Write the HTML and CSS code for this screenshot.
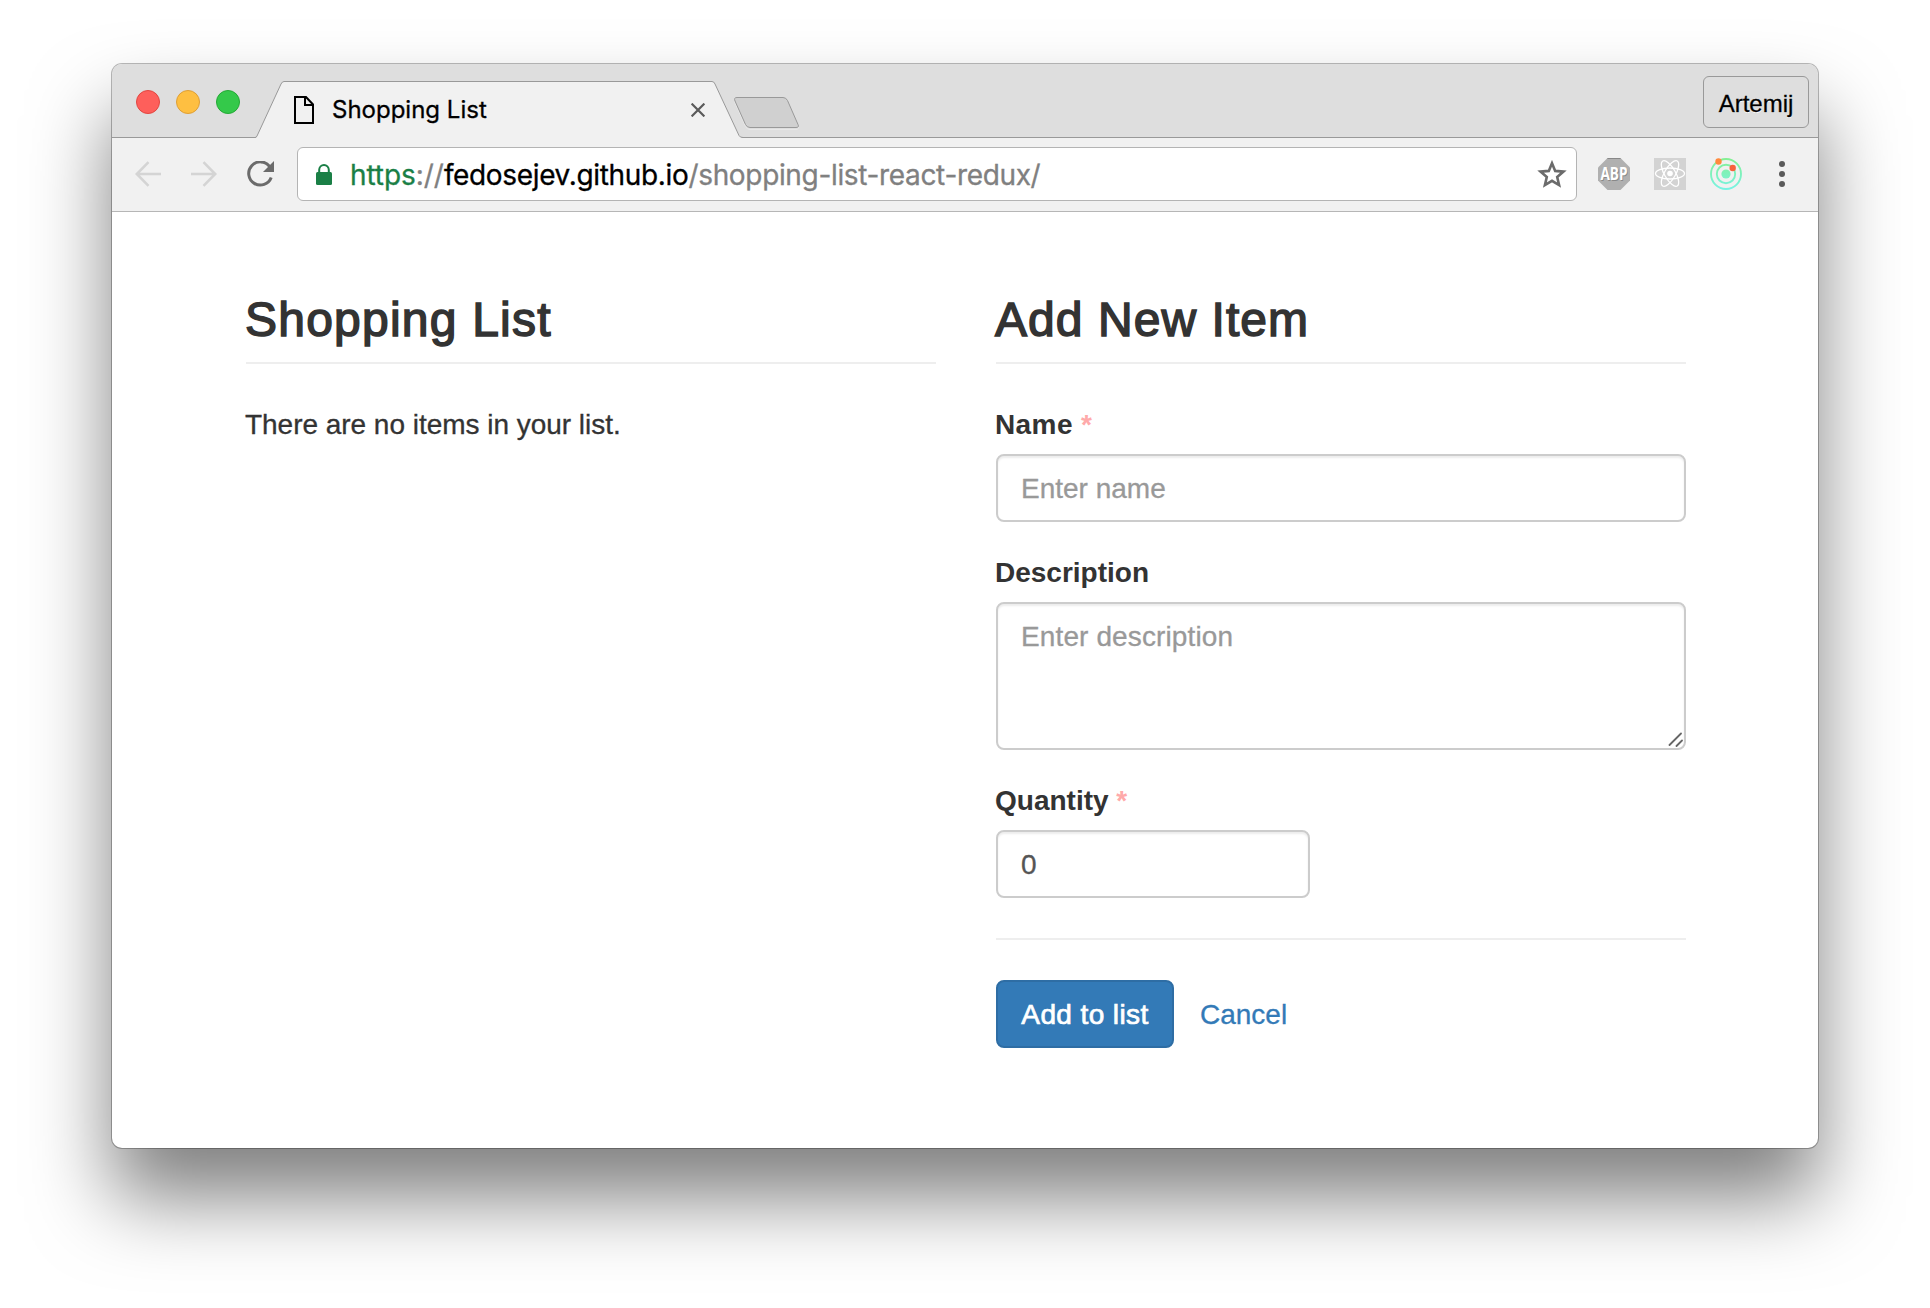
FILE: index.html
```html
<!DOCTYPE html>
<html lang="en">
<head>
<meta charset="utf-8">
<title>Shopping List</title>
<link rel="stylesheet" href="styles.css">
</head>
<body>
<div class="window">
  <div class="tab-strip">
    <div class="lights">
      <span class="light light-close"></span>
      <span class="light light-minimize"></span>
      <span class="light light-zoom"></span>
    </div>
    <div class="tab">
      <svg class="tab-shape" width="488" height="57" viewBox="0 0 488 57">
        <path d="M0 57L1 56.500Q1.600 56 2 55L26 3Q27.200 .5 29 .5H457Q459 .5 460 3L484 54.500Q485 56.500 487 56.500L488 57Z" fill="#f1f1f1"/>
        <path d="M0 56.500Q1.300 56.500 2 55L26 3Q27.200 .5 29 .5H457Q459 .5 460 3L484 54.500Q485 56.500 488 56.500" fill="none" stroke="#999"/>
      </svg>
      <svg class="tab-file" width="20" height="28" viewBox="0 0 20 28" fill="none" stroke="#000" stroke-width="2">
        <path d="M1 1H12L19 8.500V27H1Z"/><path d="M11 1V9H19"/>
      </svg>
      <span class="tab-title">Shopping List</span>
      <svg class="tab-x" width="14" height="14" viewBox="0 0 14 14" stroke="#5a5a5a" stroke-width="2.200"><path d="M.6 .6L13.400 13.400M13.400 .6L.6 13.400"/></svg>
    </div>
    <svg class="new-tab" width="67" height="33" viewBox="0 0 67 33">
      <path d="M4 1.500H50Q53 1.500 54.500 4.500L65 28Q66.500 31.500 63 31.500H17Q14 31.500 12.500 28.500L2 5Q.5 1.500 4 1.500Z" fill="none" stroke="#e8e8e8" transform="translate(0 1)"/>
      <path d="M4 .5H50Q53 .5 54.500 3.500L65 27.500Q66.500 30.500 63 30.500H17Q14 30.500 12.500 27.500L2 4Q.5 .5 4 .5Z" fill="#d0d0d0" stroke="#999"/>
    </svg>
    <div class="profile">Artemij</div>
  </div>

  <div class="toolbar">
    <svg class="nav-back" width="26" height="26" viewBox="0 0 26 26" fill="none" stroke="#d4d4d4" stroke-width="2.600"><path d="M26 13H2M13.500 1.200L1.800 13L13.500 24.800"/></svg>
    <svg class="nav-forward" width="26" height="26" viewBox="0 0 26 26" fill="none" stroke="#d4d4d4" stroke-width="2.600"><path d="M0 13H24M12.500 1.200L24.200 13L12.500 24.800"/></svg>
    <svg class="nav-reload" width="28" height="26" viewBox="0 0 28 26"><path d="M22.600 5.500A11.600 11.600 0 1 0 24.200 16.500" fill="none" stroke="#6b6b6b" stroke-width="3"/><path d="M27 0V11H16Z" fill="#6b6b6b"/></svg>
    <div class="omnibox">
      <svg class="lock" width="16" height="21" viewBox="0 0 16 21"><rect y="8" width="16" height="13" rx="1.500" fill="#1a7f46"/><path d="M3.200 9V5.800a4.800 4.800 0 0 1 9.600 0V9" fill="none" stroke="#1a7f46" stroke-width="2"/></svg>
      <span class="url"><span class="scheme">https</span><span class="muted separator">://</span>fedosejev.github.io<span class="muted">/shopping-list-react-redux/</span></span>
      <svg class="star" width="30" height="28" viewBox="0 0 30 28" fill="none" stroke="#6b6b6b" stroke-width="2.600"><path d="M15 3.200L18.200 10.900L26.500 11.600L20.200 17L22.100 25.100L15 20.800L7.900 25.100L9.800 17L3.500 11.600L11.800 10.900Z"/></svg>
    </div>
    <svg class="ext" width="32" height="32" viewBox="0 0 32 32">
      <path d="M9.500 0H22.500L32 9.500V22.500L22.500 32H9.500L0 22.500V9.500Z" fill="#b0b0b0"/><path d="M9.500 .5H22.500" stroke="#888"/>
      <text class="abp" x="16" y="22" textLength="27" lengthAdjust="spacingAndGlyphs">ABP</text>
    </svg>
    <svg class="ext" width="32" height="32" viewBox="0 0 32 32">
      <path d="M0 0H32V32H0Z" fill="#d3d3d3"/>
      <g transform="translate(16 15.500)" fill="none" stroke="#fff" stroke-width="1.300"><ellipse rx="14.500" ry="5.500"/><ellipse rx="14.500" ry="5.500" transform="rotate(60)"/><ellipse rx="14.500" ry="5.500" transform="rotate(120)"/><circle r="2.800" fill="#fff" stroke="none"/></g>
    </svg>
    <svg class="ext" width="32" height="32" viewBox="0 0 32 32">
      <defs><linearGradient id="orbit" gradientUnits="userSpaceOnUse" x1="0" y1="0" x2="0" y2="32"><stop offset="0" stop-color="#84f092"/><stop offset="1" stop-color="#78f3e6"/></linearGradient></defs>
      <g fill="none" stroke="url(#orbit)" stroke-width="1.900"><circle cx="16" cy="16" r="15"/><circle cx="16" cy="16" r="9.200"/></g>
      <circle cx="16" cy="16" r="4.600" fill="url(#orbit)"/><circle cx="8.500" cy="3.500" r="3.200" fill="#ff8a3d"/><circle cx="22.700" cy="10" r="3.200" fill="#f8623c"/>
    </svg>
    <svg class="menu" width="6" height="26" viewBox="0 0 6 26" fill="#5a5a5a"><circle cx="3" cy="3" r="3"/><circle cx="3" cy="13" r="3"/><circle cx="3" cy="23" r="3"/></svg>
  </div>

  <main class="page">
    <section>
      <h3 class="list-heading">Shopping List</h3>
      <p class="empty">There are no items in your list.</p>
    </section>
    <section>
      <h3>Add New Item</h3>
      <form>
        <div class="group">
          <label class="name-label" for="name">Name <span class="required">*</span></label>
          <input class="control" id="name" type="text" placeholder="Enter name">
        </div>
        <div class="group">
          <label for="description">Description</label>
          <div class="area">
            <textarea class="control" id="description" placeholder="Enter description"></textarea>
            <svg class="grip" width="15" height="15" viewBox="0 0 15 15" stroke="#666" stroke-width="1.800" stroke-linecap="round"><path d="M1.500 13L13 1.500M8.500 14L14 8.500"/></svg>
          </div>
        </div>
        <div class="group">
          <label for="quantity">Quantity <span class="required">*</span></label>
          <input class="control quantity" id="quantity" type="text" value="0">
        </div>
        <hr>
        <div class="actions">
          <button class="btn btn-primary" type="button">Add to list</button>
          <button class="btn btn-link" type="button">Cancel</button>
        </div>
      </form>
    </section>
  </main>
</div>
</body>
</html>
```
FILE: styles.css
```css
* { box-sizing: border-box; }
html, body { height: 100%; }
body {
  margin: 0;
  padding: 64px 112px 0;
  overflow: hidden;
  background: #fff;
  color: #333;
  font: 28px/40px "Liberation Sans", Arial, sans-serif;
}
svg { display: block; flex: none; }

.window {
  width: 1706px;
  height: 1084px;
  border-radius: 10px;
  background: #fff;
  box-shadow: 0 0 0 1px rgba(0, 0, 0, .27), 0 50px 80px rgba(0, 0, 0, .5);
}

/* Tab strip */
.tab-strip {
  display: flex;
  height: 74px;
  padding: 0 9px 0 24px;
  border-radius: 10px 10px 0 0;
  background: #dedede;
  box-shadow: inset 0 -1px #999;
}
.lights { display: flex; gap: 16px; padding-top: 26px; }
.light { width: 24px; height: 24px; border: 1px solid; border-radius: 50%; }
.light-close { background: #fe5f5b; border-color: #e24640; }
.light-minimize { background: #febf41; border-color: #df9f35; }
.light-zoom { background: #34c94a; border-color: #24a935; }
.tab {
  position: relative;
  display: flex;
  align-items: center;
  width: 488px;
  height: 57px;
  margin: 17px 0 0 15px;
  padding: 0 38px 0 39px;
}
.tab-shape { position: absolute; inset: 0; }
.tab-file, .tab-title, .tab-x { position: relative; }
.tab-title {
  margin-left: 18px;
  color: #000;
  font: 24px/30px Inter, sans-serif;
  -webkit-text-stroke: .3px;
}
.tab-x { margin-left: auto; }
.new-tab { margin: 33px 0 0 -10px; }
.profile {
  width: 106px;
  height: 52px;
  margin: 12px 0 0 auto;
  border: 1px solid #999;
  border-radius: 6px;
  color: #000;
  font-size: 24px;
  line-height: 53px;
  text-align: center;
  text-shadow: 0 1px #fff;
  -webkit-text-stroke: .3px;
}

/* Toolbar */
.toolbar {
  display: flex;
  align-items: center;
  height: 74px;
  padding: 0 33px 1px 23px;
  border-bottom: 1px solid #b6b6b6;
  background: #f1f1f1;
}
.nav-forward { margin-left: 30px; }
.nav-reload { margin-left: 30px; }
.omnibox {
  display: flex;
  align-items: center;
  width: 1280px;
  height: 54px;
  margin: 0 21px 0 22px;
  padding: 0 9px 0 18px;
  border: 1px solid #b4b4b4;
  border-radius: 6px;
  background: #fff;
}
.url {
  margin: 2px 0 0 18px;
  color: #000;
  font: 28px/40px Inter, sans-serif;
  letter-spacing: -.34px;
  white-space: nowrap;
  -webkit-text-stroke: .3px;
}
.scheme { color: #1a7f46; letter-spacing: -.1px; }
.muted { color: #808080; }
.separator { letter-spacing: 0; }
.star { margin-left: auto; }
.ext { overflow: visible; }
.ext + .ext { margin-left: 24px; }
.menu { margin-left: auto; }
.abp {
  fill: #fff;
  font: bold 17px "Open Sans", sans-serif;
  text-anchor: middle;
  text-shadow: 1px 1px #888;
}

/* Page */
.page {
  display: grid;
  grid-template-columns: 690px 690px;
  gap: 60px;
  padding: 81px 134px 0;
}
h3 {
  height: 71px;
  margin: 0 0 40px;
  border-bottom: 2px solid #eee;
  font-size: 48px;
  font-weight: 400;
  line-height: 53px;
  letter-spacing: 1.050px;
  text-indent: -1px;
  -webkit-text-stroke: 1.500px #333;
}
.list-heading { letter-spacing: 1.220px; }
.empty {
  margin: 0;
  padding-top: 1px;
  text-indent: -1px;
  letter-spacing: -.03px;
  -webkit-text-stroke: .3px;
}
.group { margin-bottom: 30px; }
label {
  display: block;
  margin-bottom: 9px;
  padding-top: 1px;
  font-weight: 700;
  text-indent: -1px;
}
.name-label { letter-spacing: .4px; }
.required { color: #faa; }
.control {
  display: block;
  width: 100%;
  height: 68px;
  padding: 13px 23px 11px;
  border: 2px solid #ccc;
  border-radius: 8px;
  outline: 0;
  background: #fff;
  box-shadow: inset 0 2px 2px rgba(0, 0, 0, .075);
  color: #555;
  font: inherit;
  resize: none;
  -webkit-text-stroke: .3px;
}
.control::placeholder { color: #999; opacity: 1; }
.area { position: relative; }
textarea.control { height: 148px; letter-spacing: .12px; }
.grip { position: absolute; right: 3px; bottom: 3px; }
.quantity { width: 314px; }
hr { margin: 40px 0; border: 0; border-top: 2px solid #eee; }
.actions { display: flex; }
.btn {
  height: 68px;
  padding: 13px 24px 11px;
  border: 2px solid transparent;
  border-radius: 8px;
  background: none;
  font: inherit;
  white-space: nowrap;
  -webkit-text-stroke: .3px;
}
.btn-primary {
  width: 178px;
  padding: 13px 0 11px;
  border-color: #2e6da4;
  background: #337ab7;
  color: #fff;
  letter-spacing: .4px;
  -webkit-text-stroke: .7px;
}
.btn-link { color: #337ab7; }
```
